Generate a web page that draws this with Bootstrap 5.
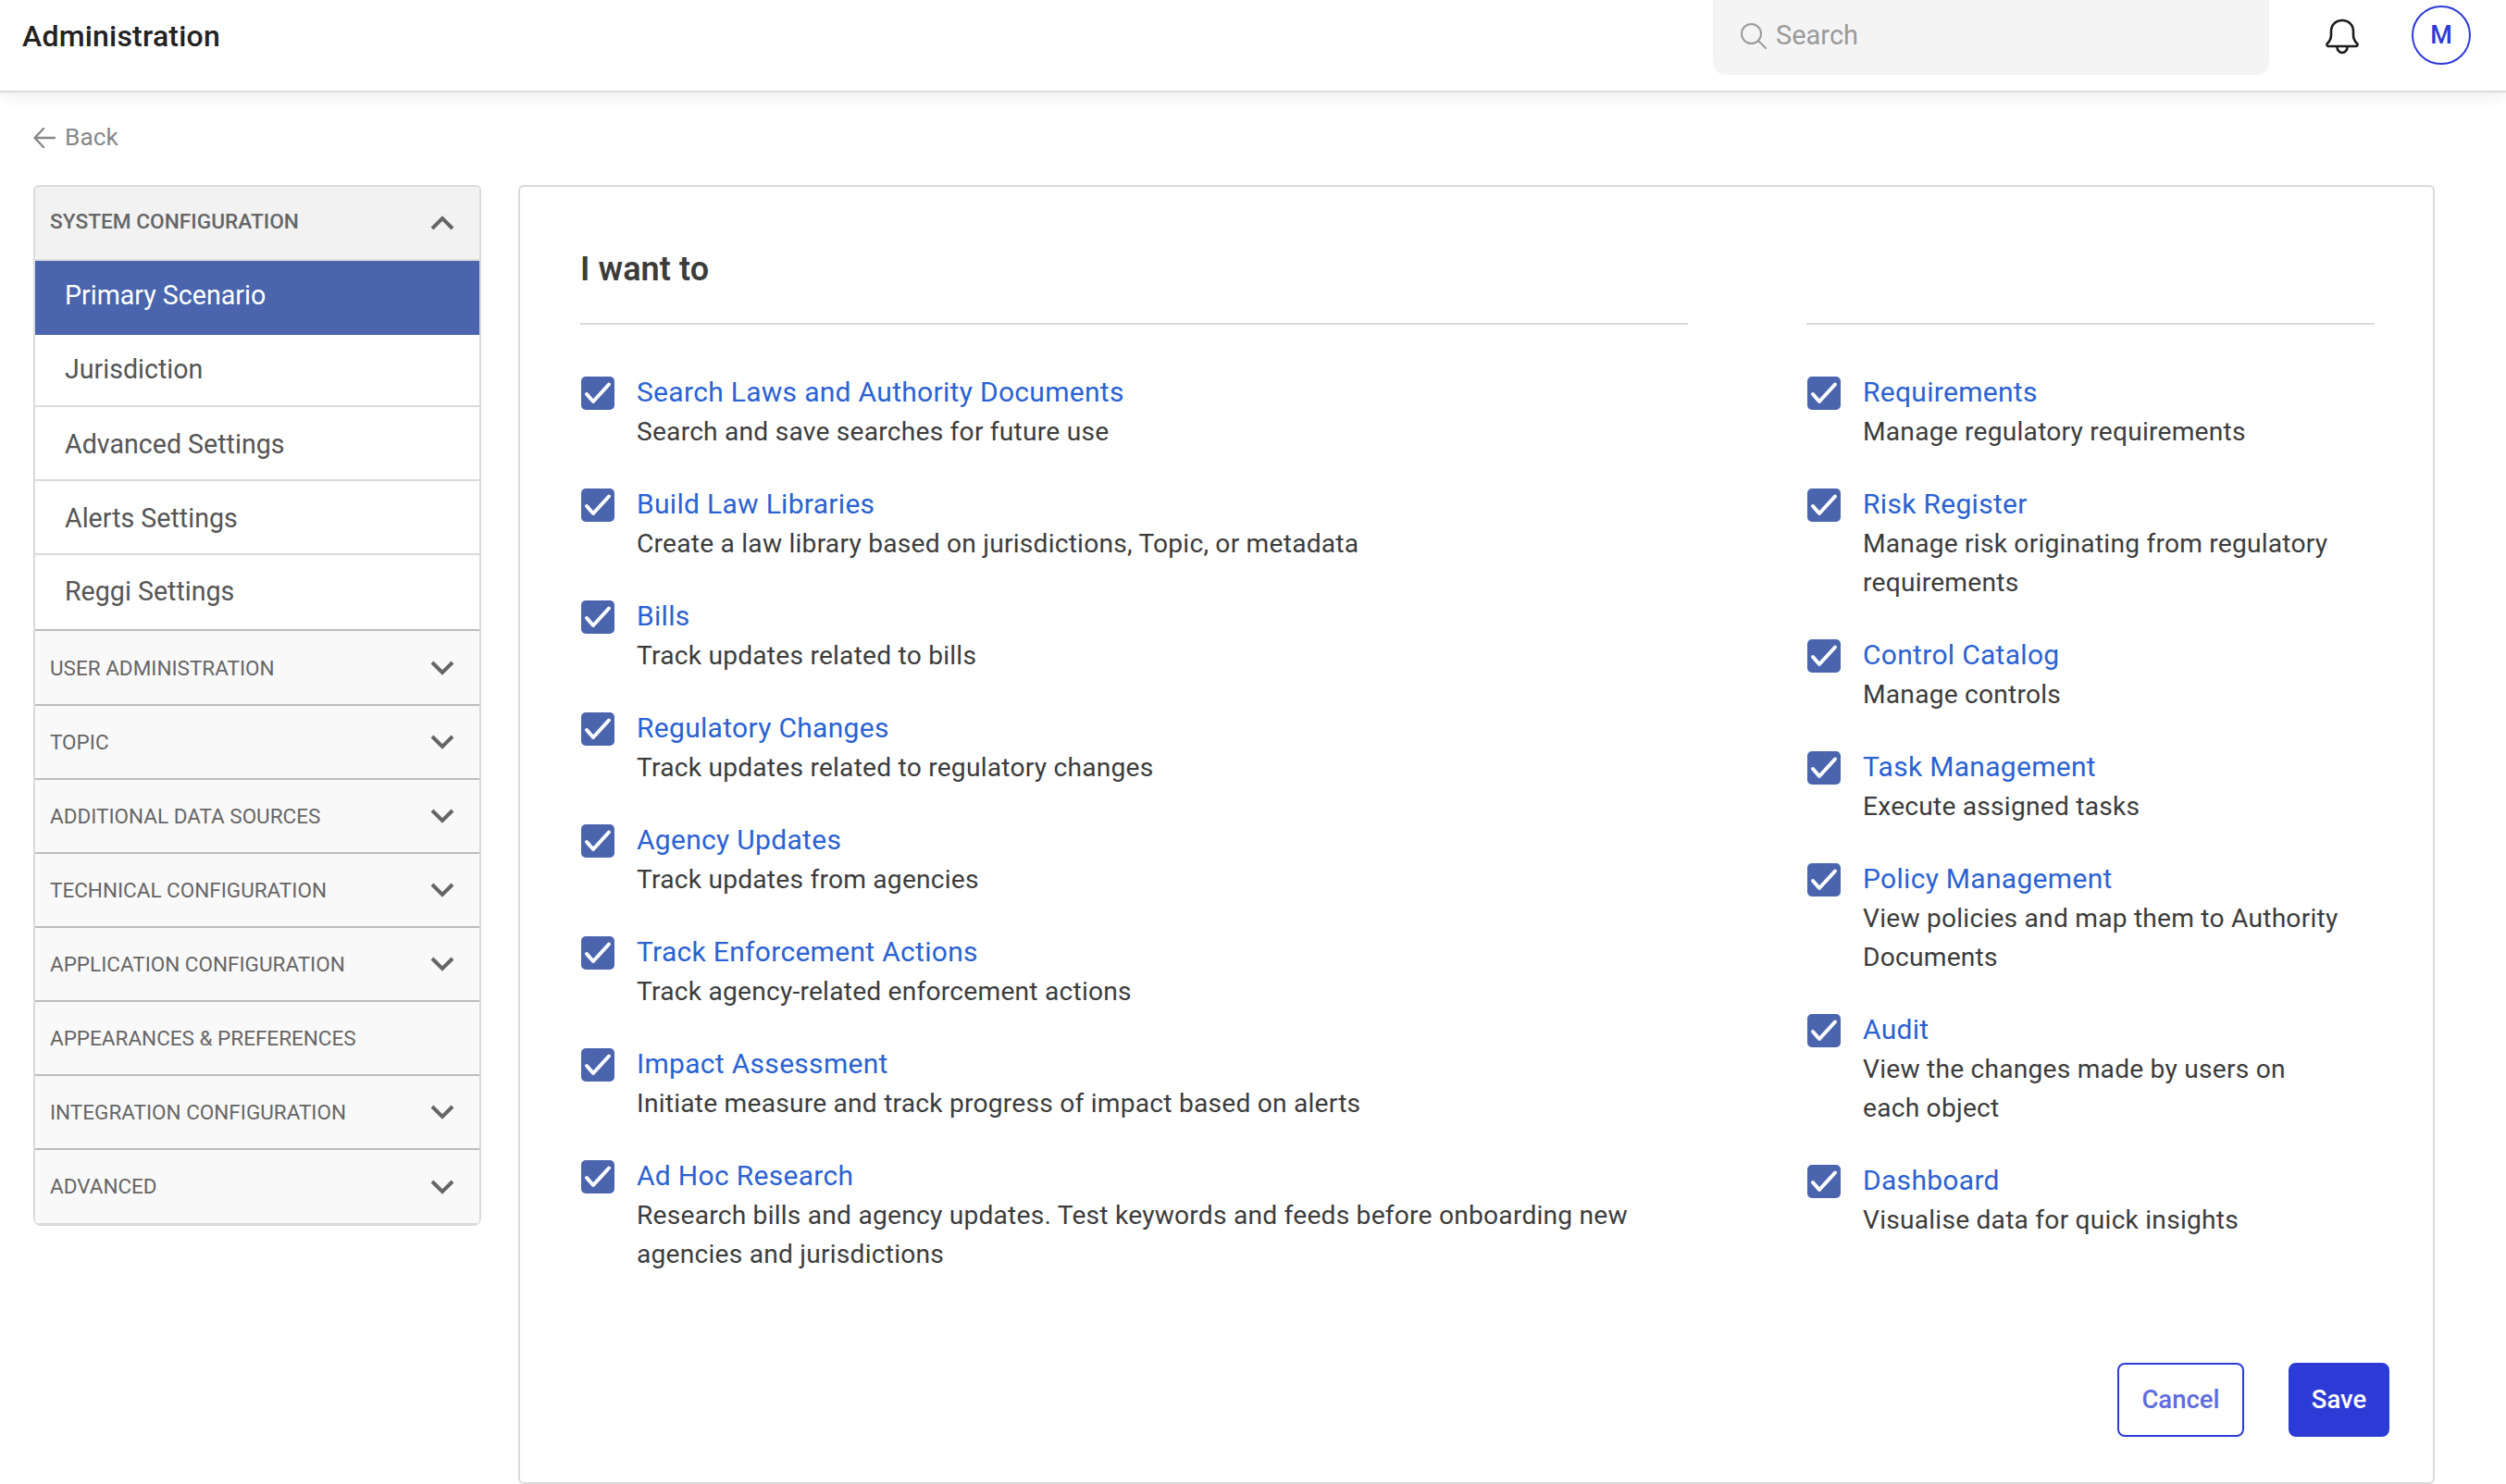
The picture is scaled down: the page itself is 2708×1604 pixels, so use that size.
<!DOCTYPE html>
<html lang="en">
<head>
<meta charset="utf-8">
<title>Administration</title>
<link href="https://cdn.jsdelivr.net/npm/bootstrap@5.3.0/dist/css/bootstrap.min.css" rel="stylesheet">
<style>
html,body{height:100%;}
body{font-family:Roboto,"Liberation Sans",sans-serif;background:#fff;color:#3c3c3c;font-size:29px;overflow:hidden;}
.top-bar{height:100px;padding:0 38px 0 24px;border-bottom:2px solid #dcdcdc;box-shadow:0 4px 16px rgba(0,0,0,.08);background:#fff;}
.top-title{font-size:32px;font-weight:500;color:#222;letter-spacing:.2px;margin-top:-21px;}
.search-box{width:601px;height:81px;margin-top:-17px;margin-right:61px;padding:0 0 3px 30px;background:#f4f4f4;border-radius:0 0 14px 14px;color:#9a9a9a;font-size:29px;gap:10px;}
.bell-btn{margin-right:57px;margin-top:-21px;}
.avatar-ring{width:64px;height:64px;margin-top:-22px;border:2px solid #2d3bd6;border-radius:50%;color:#2d3bd6;font-size:27px;font-weight:500;}
.back-row{height:100px;padding:0 0 2px 36px;color:#888;font-size:26.3px;gap:10px;}
.page-body{padding-left:36px;gap:40px;align-items:flex-start;}
.side-panel{width:484px;border:solid #dadada;border-width:2px 2px 0 2px;border-radius:6px 6px 8px 8px;overflow:hidden;}
.side-head{height:80px;padding:0 19px 0 16px;background:#f9f9f9;border-bottom:2px solid #bdbdbd;color:#666;font-size:22.5px;}
.side-head span{padding-top:1px;}
.side-head.is-open{background:#f2f2f2;font-weight:500;font-size:22.7px;border-bottom-color:#dadada;padding-bottom:1px;}
.side-head.is-open span{padding:0;}
.side-head.is-first{height:83px;border-top:2px solid #bdbdbd;padding-top:1px;}
.side-head.is-last{border-bottom-color:#dadada;border-bottom-width:3px;height:82px;}
.side-link{height:80px;padding:2px 0 0 32px;background:#fff;color:#555;font-size:28.6px;border-bottom:2px solid #dadada;}
.side-link.is-active{background:#4a65ad;color:#fff;border-bottom:0;padding:0 0 5px 32px;}
.side-link.is-top{height:78px;padding:0 0 2px 32px;}
.side-link.no-line{border-bottom:0;padding:0 0 2px 32px;}
.main-card{width:2071px;height:1404px;padding:0 47px 49px 65px;border:2px solid #dadada;border-radius:6px;}
.want-title{font-size:36px;font-weight:600;letter-spacing:.1px;color:#3c3c3c;height:149px;margin:0;border-bottom:2px solid #dadada;padding-top:67px;line-height:1.25;}
.col-left{width:1197px;}
.col-right{width:614px;}
.cols-wrap{gap:128px;}
.title-spacer{height:149px;border-bottom:2px solid #dadada;}
.item-list{padding-top:54px;gap:38px;}
.want-item{gap:24px;}
.want-item .form-check-input{width:36px;height:36px;margin:2px 0 0 1px;flex:none;border:0;border-radius:5px;background-color:#4a65ad;opacity:1;background-size:36px 36px;background-image:url("data:image/svg+xml,%3csvg xmlns='http://www.w3.org/2000/svg' viewBox='0 0 36 36'%3e%3cpath fill='none' stroke='%23fff' stroke-width='4' stroke-linecap='round' stroke-linejoin='round' d='M6 19l7 8 17-18.500'/%3e%3c/svg%3e");}
.want-text{margin-top:-3px;}
.want-link{display:block;font-size:30px;line-height:44px;color:#2b62d1;text-decoration:none;letter-spacing:.3px;}
.want-desc{font-size:28.2px;line-height:42px;color:#3c3c3c;letter-spacing:.21px;}
.col-left .want-desc{padding-right:50px;}
.col-right .want-desc{padding-right:36px;}
.act-row{gap:48px;}
.act-btn{height:80px;font-size:27.5px;font-weight:500;border-radius:8px;display:flex;align-items:center;justify-content:center;padding:0;}
.act-cancel{width:137px;border:2px solid #2d3bd6;color:#5f6ce0;background:#fff;}
.act-save{width:109px;background:#2d3bd6;border:2px solid #2d3bd6;color:#fff;}
</style>
</head>
<body>
<nav class="navbar top-bar d-flex align-items-center justify-content-start flex-nowrap">
  <div class="top-title me-auto">Administration</div>
  <div class="search-box d-flex align-items-center">
    <svg width="28" height="28" viewBox="0 0 28 28" fill="none" stroke="#9a9a9a" stroke-width="2"><circle cx="11.500" cy="11.500" r="10.500"/><path d="M19 19l8 8" stroke-linecap="round"/></svg>
    <span>Search</span>
  </div>
  <div class="bell-btn">
    <svg width="36" height="40" viewBox="0 0 36 40" fill="none" stroke="#1c1c1c" stroke-width="2.6" stroke-linejoin="round" stroke-linecap="round"><path d="M6 18V14C6 7 11 2 18 2S30 7 30 14V18C30 23 32 25 34 27C35 28 34.500 30 33 30H3C1.500 30 1 28 2 27C4 25 6 23 6 18Z"/><path d="M12.500 31a5.500 6 0 0 0 11 0"/></svg>
  </div>
  <div class="avatar-ring d-flex align-items-center justify-content-center">M</div>
</nav>
<div class="back-row d-flex align-items-center">
  <svg width="24" height="24" viewBox="0 0 24 24" fill="none" stroke="#888" stroke-width="2.4" stroke-linecap="round" stroke-linejoin="round"><path d="M23 12H2M11 2L1.500 12l9.500 10"/></svg>
  <span>Back</span>
</div>
<div class="page-body d-flex">
  <aside class="side-panel">
    <div class="side-head is-open d-flex align-items-center justify-content-between"><span>SYSTEM CONFIGURATION</span><svg class="me-2" width="26" height="16" viewBox="0 0 26 16" fill="none" stroke="#666" stroke-width="4"><path d="M2 14L13 3l11 11"/></svg></div>
    <div class="side-link is-active d-flex align-items-center">Primary Scenario</div>
    <div class="side-link is-top d-flex align-items-center">Jurisdiction</div>
    <div class="side-link d-flex align-items-center">Advanced Settings</div>
    <div class="side-link d-flex align-items-center">Alerts Settings</div>
    <div class="side-link no-line d-flex align-items-center">Reggi Settings</div>
    <div class="side-head is-first d-flex align-items-center justify-content-between"><span>USER ADMINISTRATION</span><svg class="me-2" width="26" height="16" viewBox="0 0 26 16" fill="none" stroke="#666" stroke-width="4"><path d="M2 2l11 11L24 2"/></svg></div>
    <div class="side-head d-flex align-items-center justify-content-between"><span>TOPIC</span><svg class="me-2" width="26" height="16" viewBox="0 0 26 16" fill="none" stroke="#666" stroke-width="4"><path d="M2 2l11 11L24 2"/></svg></div>
    <div class="side-head d-flex align-items-center justify-content-between"><span>ADDITIONAL DATA SOURCES</span><svg class="me-2" width="26" height="16" viewBox="0 0 26 16" fill="none" stroke="#666" stroke-width="4"><path d="M2 2l11 11L24 2"/></svg></div>
    <div class="side-head d-flex align-items-center justify-content-between"><span>TECHNICAL CONFIGURATION</span><svg class="me-2" width="26" height="16" viewBox="0 0 26 16" fill="none" stroke="#666" stroke-width="4"><path d="M2 2l11 11L24 2"/></svg></div>
    <div class="side-head d-flex align-items-center justify-content-between"><span>APPLICATION CONFIGURATION</span><svg class="me-2" width="26" height="16" viewBox="0 0 26 16" fill="none" stroke="#666" stroke-width="4"><path d="M2 2l11 11L24 2"/></svg></div>
    <div class="side-head d-flex align-items-center justify-content-between"><span>APPEARANCES &amp; PREFERENCES</span></div>
    <div class="side-head d-flex align-items-center justify-content-between"><span>INTEGRATION CONFIGURATION</span><svg class="me-2" width="26" height="16" viewBox="0 0 26 16" fill="none" stroke="#666" stroke-width="4"><path d="M2 2l11 11L24 2"/></svg></div>
    <div class="side-head is-last d-flex align-items-center justify-content-between"><span>ADVANCED</span><svg class="me-2" width="26" height="16" viewBox="0 0 26 16" fill="none" stroke="#666" stroke-width="4"><path d="M2 2l11 11L24 2"/></svg></div>
  </aside>
  <main class="main-card d-flex flex-column">
    <div class="cols-wrap d-flex">
      <div class="col-left">
        <h2 class="want-title">I want to</h2>
        <div class="item-list d-flex flex-column">
          <div class="want-item d-flex"><input class="form-check-input" type="checkbox" checked><div class="want-text"><a class="want-link" href="#">Search Laws and Authority Documents</a><div class="want-desc">Search and save searches for future use</div></div></div>
          <div class="want-item d-flex"><input class="form-check-input" type="checkbox" checked><div class="want-text"><a class="want-link" href="#">Build Law Libraries</a><div class="want-desc">Create a law library based on jurisdictions, Topic, or metadata</div></div></div>
          <div class="want-item d-flex"><input class="form-check-input" type="checkbox" checked><div class="want-text"><a class="want-link" href="#">Bills</a><div class="want-desc">Track updates related to bills</div></div></div>
          <div class="want-item d-flex"><input class="form-check-input" type="checkbox" checked><div class="want-text"><a class="want-link" href="#">Regulatory Changes</a><div class="want-desc">Track updates related to regulatory changes</div></div></div>
          <div class="want-item d-flex"><input class="form-check-input" type="checkbox" checked><div class="want-text"><a class="want-link" href="#">Agency Updates</a><div class="want-desc">Track updates from agencies</div></div></div>
          <div class="want-item d-flex"><input class="form-check-input" type="checkbox" checked><div class="want-text"><a class="want-link" href="#">Track Enforcement Actions</a><div class="want-desc">Track agency-related enforcement actions</div></div></div>
          <div class="want-item d-flex"><input class="form-check-input" type="checkbox" checked><div class="want-text"><a class="want-link" href="#">Impact Assessment</a><div class="want-desc">Initiate measure and track progress of impact based on alerts</div></div></div>
          <div class="want-item d-flex"><input class="form-check-input" type="checkbox" checked><div class="want-text"><a class="want-link" href="#">Ad Hoc Research</a><div class="want-desc">Research bills and agency updates. Test keywords and feeds before onboarding new agencies and jurisdictions</div></div></div>
        </div>
      </div>
      <div class="col-right">
        <div class="title-spacer"></div>
        <div class="item-list d-flex flex-column">
          <div class="want-item d-flex"><input class="form-check-input" type="checkbox" checked><div class="want-text"><a class="want-link" href="#">Requirements</a><div class="want-desc">Manage regulatory requirements</div></div></div>
          <div class="want-item d-flex"><input class="form-check-input" type="checkbox" checked><div class="want-text"><a class="want-link" href="#">Risk Register</a><div class="want-desc">Manage risk originating from regulatory requirements</div></div></div>
          <div class="want-item d-flex"><input class="form-check-input" type="checkbox" checked><div class="want-text"><a class="want-link" href="#">Control Catalog</a><div class="want-desc">Manage controls</div></div></div>
          <div class="want-item d-flex"><input class="form-check-input" type="checkbox" checked><div class="want-text"><a class="want-link" href="#">Task Management</a><div class="want-desc">Execute assigned tasks</div></div></div>
          <div class="want-item d-flex"><input class="form-check-input" type="checkbox" checked><div class="want-text"><a class="want-link" href="#">Policy Management</a><div class="want-desc">View policies and map them to Authority Documents</div></div></div>
          <div class="want-item d-flex"><input class="form-check-input" type="checkbox" checked><div class="want-text"><a class="want-link" href="#">Audit</a><div class="want-desc">View the changes made by users on each object</div></div></div>
          <div class="want-item d-flex"><input class="form-check-input" type="checkbox" checked><div class="want-text"><a class="want-link" href="#">Dashboard</a><div class="want-desc">Visualise data for quick insights</div></div></div>
        </div>
      </div>
    </div>
    <div class="act-row d-flex justify-content-end mt-auto">
      <button type="button" class="btn act-btn act-cancel">Cancel</button>
      <button type="button" class="btn act-btn act-save">Save</button>
    </div>
  </main>
</div>
<script src="https://cdn.jsdelivr.net/npm/bootstrap@5.3.0/dist/js/bootstrap.bundle.min.js"></script>
</body>
</html>
